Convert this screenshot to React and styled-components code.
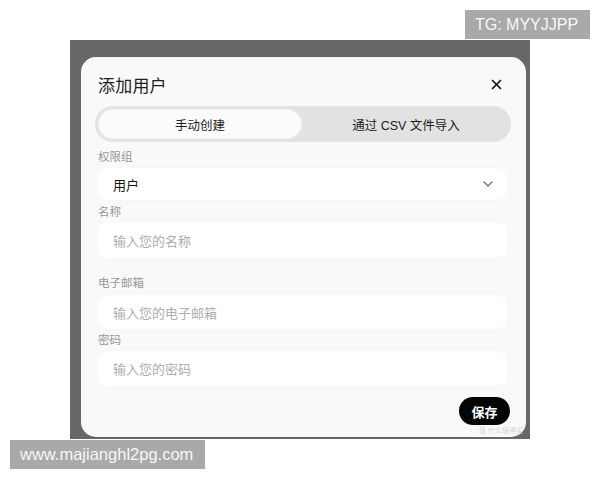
import React from "react";
import styled, { createGlobalStyle } from "styled-components";

const Global = createGlobalStyle`
  html, body {
    margin: 0;
    padding: 0;
    background: #ffffff;
  }
  body {
    font-family: "Liberation Sans", "Noto Sans CJK SC", sans-serif;
  }
`;

const Page = styled.div`
  position: relative;
  width: 600px;
  height: 480px;
  overflow: hidden;
  background: #fff;
`;

const Backdrop = styled.div`
  margin: 40px 0 0 70px;
  width: 460px;
  height: 399px;
  box-sizing: border-box;
  padding: 17px 4px 2px 11px;
  background: #676767;
`;

const Card = styled.div`
  position: relative;
  height: 100%;
  box-sizing: border-box;
  padding: 0 15px 0 14px;
  border-radius: 15px;
  background: #f9f9f9;
  display: flex;
  flex-direction: column;
`;

const Header = styled.div`
  height: 49px;
  box-sizing: border-box;
  padding: 5px 9px 0 3px;
  display: flex;
  align-items: center;
  justify-content: space-between;
`;

const Title = styled.div`
  font-size: 17px;
  color: #222;
  letter-spacing: 0.2px;
`;

const Close = styled.button`
  border: 0;
  background: none;
  padding: 0;
  width: 11px;
  height: 11px;
  display: flex;
  color: #111;
`;

const Tabs = styled.div`
  height: 36px;
  box-sizing: border-box;
  padding: 2px;
  border-radius: 18px;
  background: #e2e2e2;
  display: grid;
  grid-template-columns: 1fr 1fr;
`;

const Tab = styled.div`
  border-radius: 16px;
  display: flex;
  align-items: center;
  justify-content: center;
  font-size: 12.5px;
  font-weight: 400;
  color: #1c1c1c;
  background: ${(p) => (p.$active ? "#fbfbfb" : "transparent")};
  box-shadow: ${(p) => (p.$active ? "inset 0 0 0 1.5px #e4e4e4" : "none")};
`;

const Form = styled.div`
  padding: 0 4px 0 3px;
  display: flex;
  flex-direction: column;
`;

const Label = styled.div`
  margin-top: ${(p) => p.$top}px;
  height: 18px;
  line-height: 18px;
  font-size: 11.5px;
  color: #979797;
`;

const Field = styled.div`
  margin-top: ${(p) => p.$top}px;
  height: ${(p) => p.$h}px;
  box-sizing: border-box;
  padding: 0 14px 0 15px;
  border-radius: 10px;
  background: #ffffff;
  box-shadow: 0 0 2px rgba(0, 0, 0, 0.03);
  display: flex;
  align-items: center;
  justify-content: space-between;
  font-size: 13px;
  color: ${(p) => (p.$placeholder ? "#adadad" : "#151515")};
`;

const Footer = styled.div`
  margin-top: 11px;
  padding-right: 1px;
  display: flex;
  justify-content: flex-end;
`;

const SaveButton = styled.button`
  width: 51px;
  height: 28px;
  border: 0;
  border-radius: 14px;
  background: #050505;
  color: #fff;
  font-family: "Noto Sans CJK SC", sans-serif;
  font-size: 13px;
  font-weight: 700;
  padding: 0;
`;

const Mark = styled.div`
  position: absolute;
  right: 3px;
  bottom: 2px;
  font-size: 7px;
  color: #d4d4d4;
`;

const Badge = styled.div`
  position: absolute;
  left: ${(p) => p.$x}px;
  top: ${(p) => p.$y}px;
  width: ${(p) => p.$w}px;
  height: ${(p) => p.$h}px;
  box-sizing: border-box;
  padding-left: 10px;
  display: flex;
  align-items: center;
  background: #a9a9a9;
  color: #f7f7f7;
  font-family: "Liberation Sans", Arial, sans-serif;
  font-size: ${(p) => p.$size}px;
`;

function CloseIcon() {
  return (
    <svg width="11" height="11" viewBox="0 0 11 11">
      <path d="M1.5 1.5 L9.5 9.5 M9.5 1.5 L1.5 9.5" stroke="currentColor" strokeWidth="1.7" strokeLinecap="round" />
    </svg>
  );
}

function Chevron() {
  return (
    <svg width="10" height="6" viewBox="0 0 10 6">
      <path d="M1 1 L5 5 L9 1" fill="none" stroke="#6a6a6a" strokeWidth="1.2" strokeLinecap="round" strokeLinejoin="round" />
    </svg>
  );
}

export default function App() {
  return (
    <Page>
      <Global />
      <Backdrop>
        <Card>
          <Header>
            <Title>添加用户</Title>
            <Close>
              <CloseIcon />
            </Close>
          </Header>
          <Tabs>
            <Tab $active>手动创建</Tab>
            <Tab>通过 CSV 文件导入</Tab>
          </Tabs>
          <Form>
            <Label $top={6}>权限组</Label>
            <Field $top={2} $h={32}>
              用户
              <Chevron />
            </Field>
            <Label $top={3}>名称</Label>
            <Field $top={1} $h={36} $placeholder>
              输入您的名称
            </Field>
            <Label $top={16}>电子邮箱</Label>
            <Field $top={3} $h={34} $placeholder>
              输入您的电子邮箱
            </Field>
            <Label $top={2}>密码</Label>
            <Field $top={2} $h={35} $placeholder>
              输入您的密码
            </Field>
          </Form>
          <Footer>
            <SaveButton>保存</SaveButton>
          </Footer>
          <Mark>值 什么值得买</Mark>
        </Card>
      </Backdrop>
      <Badge $x={465} $y={10} $w={125} $h={29} $size={16}>
        TG: MYYJJPP
      </Badge>
      <Badge $x={10} $y={440} $w={195} $h={29} $size={16.5}>
        www.majianghl2pg.com
      </Badge>
    </Page>
  );
}
